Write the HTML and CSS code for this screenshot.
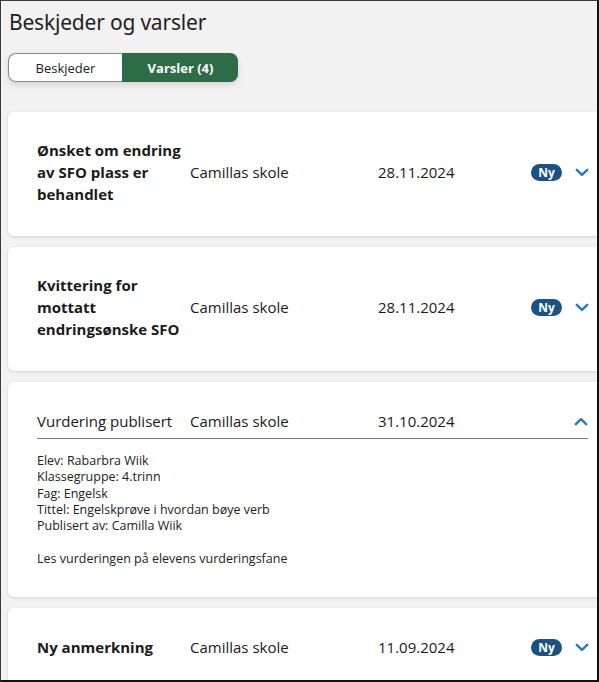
FILE: index.html
```html
<!DOCTYPE html>
<html lang="no">
<head>
<meta charset="utf-8">
<title>Beskjeder og varsler</title>
<link rel="stylesheet" href="styles.css">
</head>
<body>
<div class="frame">
  <h1 class="page-title">Beskjeder og varsler</h1>
  <div class="tabs">
    <button class="tab">Beskjeder</button>
    <button class="tab tab-active">Varsler (4)</button>
  </div>
  <div class="list">
    <div class="card">
      <div class="row">
        <div class="col-title bold">Ønsket om endring av SFO plass er behandlet</div>
        <div class="col-school">Camillas skole</div>
        <div class="col-date">28.11.2024</div>
        <span class="badge">Ny</span>
        <svg class="chev" viewBox="0 0 14 9" width="14" height="9"><path d="M1.8 1.8 L7 6.8 L12.2 1.8" fill="none" stroke="#2f7ab8" stroke-width="2.5" stroke-linecap="round" stroke-linejoin="round"/></svg>
      </div>
    </div>
    <div class="card">
      <div class="row">
        <div class="col-title bold">Kvittering for mottatt endringsønske SFO</div>
        <div class="col-school">Camillas skole</div>
        <div class="col-date">28.11.2024</div>
        <span class="badge">Ny</span>
        <svg class="chev" viewBox="0 0 14 9" width="14" height="9"><path d="M1.8 1.8 L7 6.8 L12.2 1.8" fill="none" stroke="#2f7ab8" stroke-width="2.5" stroke-linecap="round" stroke-linejoin="round"/></svg>
      </div>
    </div>
    <div class="card card-open">
      <div class="row row-open">
        <div class="col-title">Vurdering publisert</div>
        <div class="col-school">Camillas skole</div>
        <div class="col-date">31.10.2024</div>
        <span class="badge-space"></span>
        <svg class="chev" viewBox="0 0 14 9" width="14" height="9"><path d="M1.8 7.2 L7 2.2 L12.2 7.2" fill="none" stroke="#2f7ab8" stroke-width="2.5" stroke-linecap="round" stroke-linejoin="round"/></svg>
      </div>
      <div class="details">
        <div>Elev: Rabarbra Wiik</div>
        <div>Klassegruppe: 4.trinn</div>
        <div>Fag: Engelsk</div>
        <div>Tittel: Engelskprøve i hvordan bøye verb</div>
        <div>Publisert av: Camilla Wiik</div>
        <div class="details-gap">Les vurderingen på elevens vurderingsfane</div>
      </div>
    </div>
    <div class="card">
      <div class="row">
        <div class="col-title bold">Ny anmerkning</div>
        <div class="col-school">Camillas skole</div>
        <div class="col-date">11.09.2024</div>
        <span class="badge">Ny</span>
        <svg class="chev" viewBox="0 0 14 9" width="14" height="9"><path d="M1.8 1.8 L7 6.8 L12.2 1.8" fill="none" stroke="#2f7ab8" stroke-width="2.5" stroke-linecap="round" stroke-linejoin="round"/></svg>
      </div>
    </div>
  </div>
</div>
</body>
</html>
```
FILE: styles.css
```css
html, body {
  margin: 0;
  padding: 0;
}
body {
  font-family: "Open Sans", "Noto Sans", sans-serif;
  color: #1a1a1a;
}
.frame {
  box-sizing: border-box;
  width: 599px;
  height: 682px;
  overflow: hidden;
  background: #f2f2f2;
  border-top: 1px solid #3a3a3a;
  border-left: 1px solid #3a3a3a;
  border-right: 2px solid #111;
  border-bottom: 2px solid #111;
  padding-left: 7px;
}
.page-title {
  margin: 0;
  padding-top: 6px;
  padding-left: 1px;
  font-family: "Noto Sans", "Open Sans", sans-serif;
  font-weight: 400;
  font-size: 21px;
  line-height: 30px;
  color: #222;
  letter-spacing: -0.2px;
}
.tabs {
  display: flex;
  margin-top: 16px;
  width: 230px;
  height: 29px;
  border-radius: 8px;
  box-shadow: 0 3px 6px rgba(0, 0, 0, 0.12);
}
.tab {
  flex: 0 0 114px;
  box-sizing: border-box;
  font-family: "Open Sans", sans-serif;
  font-size: 13px;
  color: #222;
  background: #fff;
  border: 1px solid #8a8a8a;
  border-right: none;
  border-radius: 8px 0 0 8px;
  padding: 0;
  cursor: pointer;
}
.tab-active {
  flex: 0 0 116px;
  background: #2e6b47;
  border-color: #2e6b47;
  color: #fff;
  font-weight: 700;
  border-radius: 0 8px 8px 0;
}
.list {
  margin-top: 30px;
  display: flex;
  flex-direction: column;
  gap: 11px;
}
.card {
  background: #fff;
  border-radius: 6px 0 0 6px;
  box-shadow: 0 1px 3px rgba(0, 0, 0, 0.13);
  padding: 27px 8px 31px 29px;
}
.card-open {
  padding-bottom: 30px;
}
.row {
  display: grid;
  grid-template-columns: 153px 188px 1fr 31px 27px;
  min-height: 24px;
  align-items: center;
  font-size: 15px;
  line-height: 22px;
}
.row-open {
  border-bottom: 1px solid #777;
  padding-bottom: 5px;
  margin-right: 1px;
}
.bold {
  font-weight: 700;
}
.badge {
  display: inline-block;
  width: 31px;
  height: 17px;
  line-height: 17px;
  border-radius: 9px;
  background: #1b5282;
  color: #fff;
  font-size: 12px;
  font-weight: 700;
  text-align: center;
}
.badge-space {
  width: 31px;
}
.chev {
  display: block;
  justify-self: end;
}
.details {
  margin-top: 14px;
  font-size: 12.5px;
  line-height: 16.3px;
  color: #222;
}
.details-gap {
  margin-top: 16.3px;
}
```
